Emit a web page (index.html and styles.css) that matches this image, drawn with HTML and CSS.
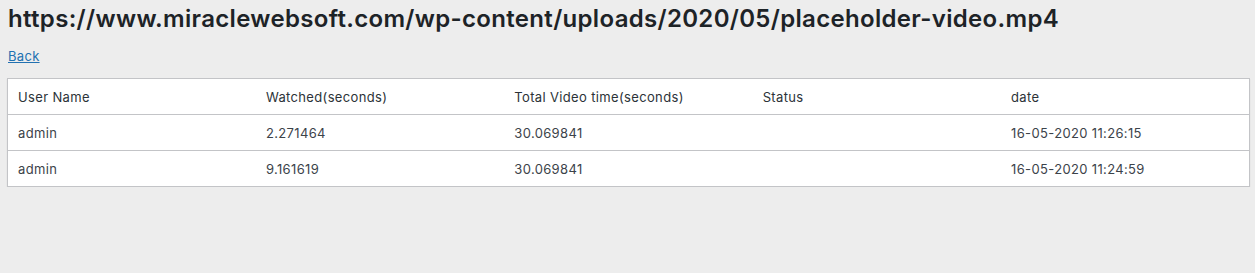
FILE: index.html
```html
<!DOCTYPE html>
<html lang="en">
<head>
    <meta charset="UTF-8">
    <meta name="viewport" content="width=device-width, initial-scale=1.0">
    <title>Video Watch Log</title>
    <link rel="stylesheet" href="styles.css">
</head>
<body>
    <div class="wrap">
        <h1 class="video-title">https://www.miraclewebsoft.com/wp-content/uploads/2020/05/placeholder-video.mp4</h1>
        <a href="#" class="back-link">Back</a>

        <table class="log-table">
            <thead>
                <tr>
                    <th>User Name</th>
                    <th>Watched(seconds)</th>
                    <th>Total Video time(seconds)</th>
                    <th>Status</th>
                    <th>date</th>
                </tr>
            </thead>
            <tbody>
                <tr>
                    <td>admin</td>
                    <td>2.271464</td>
                    <td>30.069841</td>
                    <td></td>
                    <td>16-05-2020 11:26:15</td>
                </tr>
                <tr>
                    <td>admin</td>
                    <td>9.161619</td>
                    <td>30.069841</td>
                    <td></td>
                    <td>16-05-2020 11:24:59</td>
                </tr>
            </tbody>
        </table>
    </div>
</body>
</html>
```

FILE: styles.css
```css
/* Global styles */
body {
    font-family: Inter, "Liberation Sans", Arial, sans-serif;
    margin: 0;
    padding: 0;
    background-color: #ededed;
    color: #1d2327;
    font-size: 13px;
}

.wrap {
    padding: 0 5px 0 7px;
}

.video-title {
    font-size: 24px;
    font-weight: 600;
    letter-spacing: 0.32px;
    line-height: 28px;
    margin: 0;
    padding: 5px 0 0 1px;
    color: #1d2327;
}

.back-link {
    display: inline-block;
    margin: 15px 0 0 1px;
    color: #2271b1;
    font-size: 13px;
    line-height: 16px;
    letter-spacing: 0.3px;
}

/* Log table */
.log-table {
    width: 100%;
    margin-top: 14px;
    border-collapse: collapse;
    table-layout: fixed;
    background-color: #fff;
    border: 1px solid #c3c4c7;
    box-shadow: 0 1px 1px rgba(0, 0, 0, 0.12);
}

.log-table th,
.log-table td {
    text-align: left;
    font-weight: 400;
    color: #3c434a;
    padding: 0 10px;
    height: 35px;
    font-size: 13px;
    letter-spacing: 0.35px;
}

.log-table th {
    color: #2c3338;
}

.log-table tbody tr {
    border-top: 1px solid #c3c4c7;
}
```
